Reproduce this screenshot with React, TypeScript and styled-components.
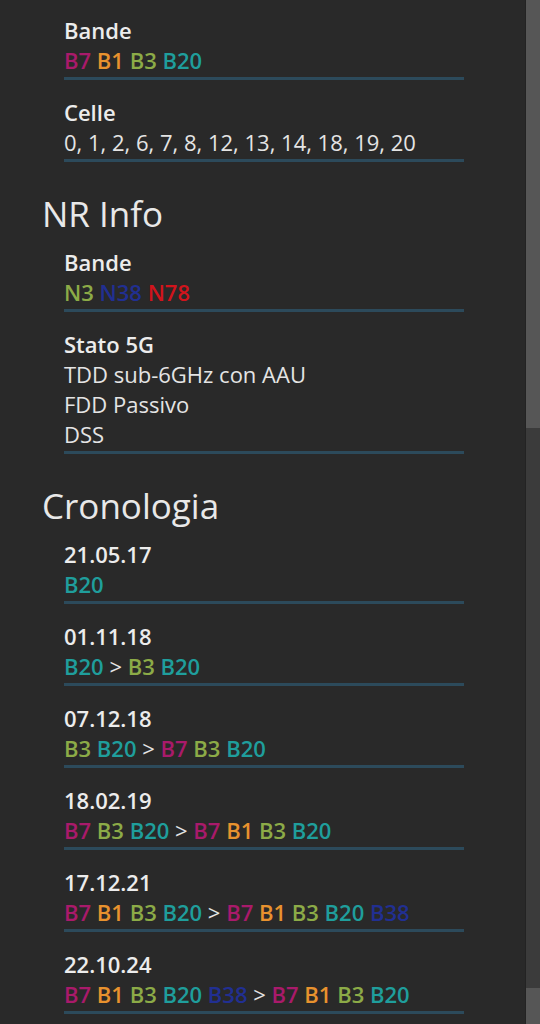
import styled, { createGlobalStyle } from "styled-components";

const GlobalStyle = createGlobalStyle`
  html, body {
    margin: 0;
    padding: 0;
    background: #292929;
  }
  body {
    font-family: "Open Sans", "Noto Sans", sans-serif;
    color: #e6e6e6;
  }
`;

const bandColors: Record<string, string> = {
  B7: "#a91a6b",
  B1: "#e8922e",
  B3: "#8cab47",
  B20: "#1f9e9c",
  B38: "#212f92",
  N3: "#8cab47",
  N38: "#212f92",
  N78: "#d1141c",
};

type Entry = { label: string; bands?: string; lines?: string[] };

const lteItems: Entry[] = [
  { label: "Bande", bands: "B7 B1 B3 B20" },
  { label: "Celle", lines: ["0, 1, 2, 6, 7, 8, 12, 13, 14, 18, 19, 20"] },
];

const nrItems: Entry[] = [
  { label: "Bande", bands: "N3 N38 N78" },
  { label: "Stato 5G", lines: ["TDD sub-6GHz con AAU", "FDD Passivo", "DSS"] },
];

const history: Entry[] = [
  { label: "21.05.17", bands: "B20" },
  { label: "01.11.18", bands: "B20 > B3 B20" },
  { label: "07.12.18", bands: "B3 B20 > B7 B3 B20" },
  { label: "18.02.19", bands: "B7 B3 B20 > B7 B1 B3 B20" },
  { label: "17.12.21", bands: "B7 B1 B3 B20 > B7 B1 B3 B20 B38" },
  { label: "22.10.24", bands: "B7 B1 B3 B20 B38 > B7 B1 B3 B20" },
];

const BandLine = ({ text }: { text: string }) => {
  const parts = text.split(" ");
  return (
    <Value>
      {parts.map((p, i) => (
        <span key={i}>
          {p === ">" ? <Arrow>&gt;</Arrow> : <Band $color={bandColors[p]}>{p}</Band>}
          {i < parts.length - 1 ? " " : ""}
        </span>
      ))}
    </Value>
  );
};

const InfoItem = ({ item }: { item: Entry }) => (
  <Item>
    <Label>{item.label}</Label>
    {item.bands && <BandLine text={item.bands} />}
    {item.lines && item.lines.map((l) => <Value key={l}>{l}</Value>)}
  </Item>
);

const App = () => {
  return (
    <>
      <GlobalStyle />
      <Screen>
        <Main>
          <Section>
            {lteItems.map((it) => (
              <InfoItem key={it.label} item={it} />
            ))}
          </Section>
          <Section>
            <SectionTitle>NR Info</SectionTitle>
            {nrItems.map((it) => (
              <InfoItem key={it.label} item={it} />
            ))}
          </Section>
          <Section>
            <SectionTitle>Cronologia</SectionTitle>
            {history.map((it) => (
              <InfoItem key={it.label} item={it} />
            ))}
          </Section>
        </Main>
        <ScrollRail>
          <Thumb $height={428} />
          <Track />
          <Thumb $height={36} />
        </ScrollRail>
      </Screen>
    </>
  );
};

export default App;

const Screen = styled.div`
  display: flex;
  flex-direction: row;
  height: 1024px;
  overflow: hidden;
`;

const Main = styled.main`
  flex: 1;
  display: flex;
  flex-direction: column;
  padding: 15px 0 0 42px;
  border-right: 1px solid #232323;
`;

const Section = styled.section`
  display: flex;
  flex-direction: column;
`;

const SectionTitle = styled.h2`
  margin: 14px 0 12px;
  font-size: 35px;
  line-height: 42px;
  font-weight: 500;
  color: #e8e8e8;
`;

const Item = styled.div`
  display: flex;
  flex-direction: column;
  width: 400px;
  margin: 0 0 17px 22px;
  padding-bottom: 2px;
  border-bottom: 3px solid #2c4a5b;
`;

const Label = styled.div`
  font-size: 22px;
  line-height: 30px;
  font-weight: 600;
  color: #ececec;
`;

const Value = styled.div`
  font-size: 22px;
  line-height: 30px;
  font-weight: 400;
  color: #e4e4e4;
  white-space: nowrap;
`;

const Band = styled.span<{ $color: string }>`
  color: ${(p) => p.$color};
  font-weight: 600;
`;

const Arrow = styled.span`
  color: #e4e4e4;
`;

const ScrollRail = styled.div`
  width: 14px;
  display: flex;
  flex-direction: column;
  background: #3b3b3b;
`;

const Thumb = styled.div<{ $height: number }>`
  height: ${(p) => p.$height}px;
  background: #565656;
`;

const Track = styled.div`
  flex: 1;
  background: #3b3b3b;
`;
